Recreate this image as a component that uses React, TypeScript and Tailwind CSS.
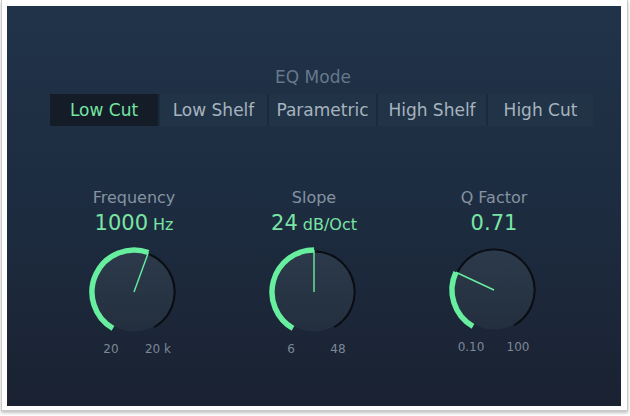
const modes = ['Low Cut', 'Low Shelf', 'Parametric', 'High Shelf', 'High Cut'];
const modeWidths = ['w-[108px]', 'w-[107px]', 'w-[107px]', 'w-[108px]', 'w-[105px]'];

type KnobProps = {
	id: string;
	label: string;
	value: string;
	unit?: string;
	angle: number;
	min: string;
	max: string;
};

function pt(angle: number, r: number) {
	const a = (angle * Math.PI) / 180;
	return [50 + r * Math.sin(a), 50 - r * Math.cos(a)];
}

function arc(from: number, to: number, r: number) {
	const [x1, y1] = pt(from, r);
	const [x2, y2] = pt(to, r);
	const large = to - from > 180 ? 1 : 0;
	return `M${x1} ${y1} A${r} ${r} 0 ${large} 1 ${x2} ${y2}`;
}

function Knob({ id, label, value, unit, angle, min, max }: KnobProps) {
	const [px, py] = pt(angle, 42);
	return (
		<div className="w-[160px] flex flex-col items-center">
			<span className="text-[16px] leading-[20px] text-[#8593a2]">{label}</span>
			<span className="mt-[2px] text-[21px] leading-[26px] text-[#79e5a4]">
				{value}
				{unit && <span className="text-[16px] ml-[5px]">{unit}</span>}
			</span>
			<svg className="mt-[4px]" width="100" height="100" viewBox="0 0 100 100">
				<defs>
					<linearGradient id={`body-${id}`} x1="0" y1="0" x2="0" y2="1">
						<stop offset="0" stopColor="#2c3a4b" />
						<stop offset="1" stopColor="#232f3e" />
					</linearGradient>
				</defs>
				<path d={arc(-150, 150, 40.5)} stroke="#0a0e13" strokeWidth="2.2" fill="none" />
				<circle cx="50" cy="50" r="39.5" fill={`url(#body-${id})`} />
				<path d={arc(-150, angle, 42)} stroke="#67ef9f" strokeWidth="5.5" fill="none" />
				<line x1="50" y1="50" x2={px} y2={py} stroke="#67ef9f" strokeWidth="1.4" />
			</svg>
			<div className="w-[160px] flex gap-[7px] pl-[37px] text-[12px] leading-[14px] text-[#7b8896]">
				<span className="w-[40px] text-center">{min}</span>
				<span className="w-[40px] text-center">{max}</span>
			</div>
		</div>
	);
}

export default function App() {
	return (
		<div
			className="w-[630px] h-[416px] bg-white pl-[1px]"
			style={{ fontFamily: '"DejaVu Sans", sans-serif' }}>
			<div className="w-[627px] h-[411px] bg-white border-l border-r border-b border-[#cbcbcb] shadow-[0_2px_3px_rgba(0,0,0,0.25)] pl-[5px] pt-[6px]">
				<div className="w-[614px] h-[400px] bg-gradient-to-b from-[#203349] via-[#1d2c40] to-[#1a2232] flex flex-col">
					<span className="mt-[61px] text-center text-[17px] leading-[20px] text-[#66798a] pr-[2px]">
						EQ Mode
					</span>
					<div className="mt-[7px] ml-[43px] w-[543px] h-[32px] flex gap-[2px] bg-[#1a2a3b]">
						{modes.map((m, i) => (
							<div
								key={m}
								className={`${modeWidths[i]} h-full flex items-center justify-center pt-[2px] text-[17px] ${
									i === 0 ? 'bg-[#131c27] text-[#74e6a2]' : 'bg-[#213346] text-[#a7b3bf]'
								}`}>
								{m}
							</div>
						))}
					</div>
					<div className="mt-[62px] pl-[47px] flex gap-[20px]">
						<Knob id="freq" label="Frequency" value="1000" unit="Hz" angle={20} min="20" max="20 k" />
						<Knob id="slope" label="Slope" value="24" unit="dB/Oct" angle={0} min="6" max="48" />
						<Knob id="q" label="Q Factor" value="0.71" angle={-65} min="0.10" max="100" />
					</div>
				</div>
			</div>
		</div>
	);
}
